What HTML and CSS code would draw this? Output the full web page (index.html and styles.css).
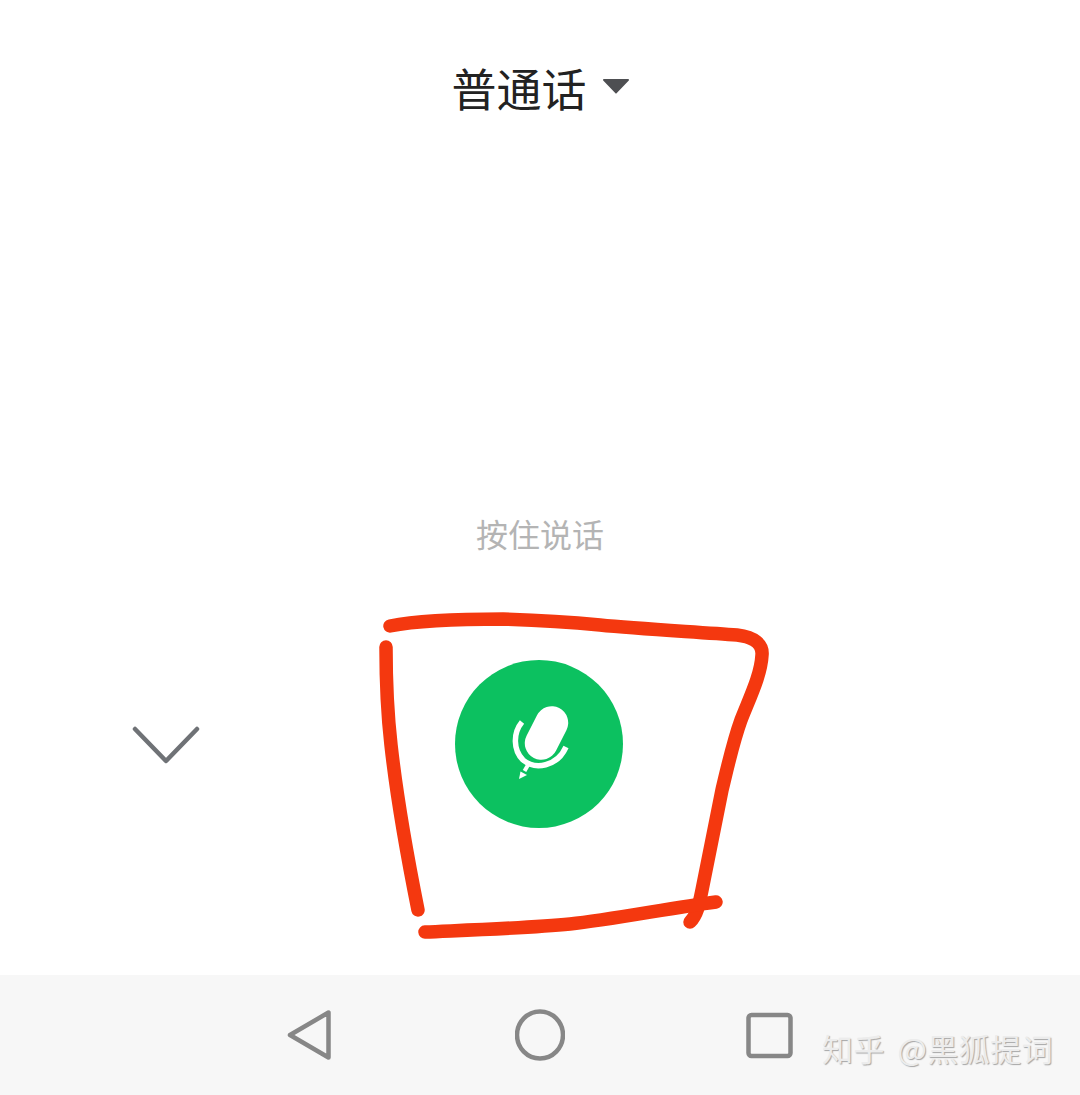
FILE: index.html
```html
<!DOCTYPE html>
<html lang="zh-CN">
<head>
<meta charset="utf-8">
<title>普通话</title>
<link rel="stylesheet" href="styles.css">
</head>
<body>
<div class="page">
  <main class="main">
    <div class="title">
      <span class="title-text">普通话</span>
      <svg class="caret" width="26" height="16" viewBox="0 0 26 16"><path d="M1 1h24a1 1 0 0 1 .8 1.500L13.800 15a1 1 0 0 1-1.600 0L.2 2.500A1 1 0 0 1 1 1z" fill="#4e4f52"/></svg>
    </div>
    <p class="hint">按住说话</p>
    <div class="controls">
      <svg class="chevron" width="70" height="40" viewBox="0 0 70 40"><path d="M4 3l31 32L66 3" fill="none" stroke="#6f7276" stroke-width="4.500" stroke-linecap="round" stroke-linejoin="round"/></svg>
      <button class="mic" type="button" aria-label="按住说话">
        <svg width="168" height="168" viewBox="455 660 168 168">
          <rect x="530" y="705" width="33" height="56" rx="16.500" transform="rotate(27 546.500 733)" fill="#fff"/>
          <path d="M522 722C513 733 513 750 523 760C535 770 557 767 566 747" fill="none" stroke="#fff" stroke-width="5.500" stroke-linecap="butt"/>
          <path d="M528 765l-3.500 6" fill="none" stroke="#fff" stroke-width="4"/>
          <path d="M520.500 771.500l6.500 3.500l-8 4z" fill="#fff"/>
        </svg>
      </button>
    </div>
    <svg class="scribble" width="1080" height="975" viewBox="0 0 1080 975">
      <g fill="none" stroke="#f4380f" stroke-width="13.500" stroke-linecap="round" stroke-linejoin="round">
        <path d="M390 626C420 620 470 619 503 619C540 620 570 622 600 625C640 629 700 632 737 635C755 637 763 645 762 655C761 675 750 697 741 720C733 742 728 765 722 790C715 825 708 860 702 890C699 905 697 915 690 922"/>
        <path d="M386 647C386 680 387 710 391 745C396 790 405 845 418 910"/>
        <path d="M425 932C470 930 530 928 570 924C610 920 670 908 716 902"/>
      </g>
    </svg>
  </main>
  <nav class="nav">
    <svg width="50" height="54" viewBox="0 0 50 54"><path d="M5 27L43.500 4.500V49.500z" fill="none" stroke="#878787" stroke-width="4.500" stroke-linejoin="round"/></svg>
    <svg width="50" height="54" viewBox="0 0 50 54"><ellipse cx="25" cy="27" rx="23" ry="23.500" fill="none" stroke="#878787" stroke-width="4.500"/></svg>
    <svg width="50" height="54" viewBox="0 0 50 54"><rect x="3.500" y="7" width="42" height="41" rx="3" fill="none" stroke="#878787" stroke-width="4.500"/></svg>
    <span class="watermark">知乎 @黑狐提词</span>
  </nav>
</div>
</body>
</html>
```

FILE: styles.css
```css
* {
  box-sizing: border-box;
}

html,
body {
  margin: 0;
  padding: 0;
  background: #ffffff;
}

body {
  font-family: "Noto Sans CJK SC", "Noto Sans", sans-serif;
}

.page {
  width: 1080px;
  height: 1095px;
  display: flex;
  flex-direction: column;
  overflow: hidden;
}

.main {
  position: relative;
  height: 975px;
  display: flex;
  flex-direction: column;
  align-items: center;
  background: #ffffff;
}

.title {
  margin-top: 60px;
  height: 60px;
  display: flex;
  align-items: center;
  gap: 16px;
}

.title-text {
  font-size: 45px;
  line-height: 54px;
  margin-top: -4px;
  color: #222222;
}

.caret {
  display: block;
  margin-top: -8px;
}

.hint {
  margin: 393px 0 0;
  font-size: 32px;
  line-height: 40px;
  color: #b4b4b4;
}

.controls {
  width: 100%;
  margin-top: 107px;
  display: grid;
  grid-template-columns: 455px 168px 1fr;
  align-items: center;
}

.chevron {
  display: block;
  justify-self: start;
  margin-left: 131px;
  margin-top: 4px;
}

.mic {
  width: 168px;
  height: 168px;
  padding: 0;
  border: 0;
  border-radius: 50%;
  background: #0cc160;
}

.mic svg {
  display: block;
}

.scribble {
  position: absolute;
  left: 0;
  top: 0;
}

.nav {
  position: relative;
  height: 120px;
  display: flex;
  align-items: center;
  justify-content: center;
  gap: 180px;
  background: #f7f7f7;
}

.watermark {
  position: absolute;
  left: 822px;
  top: 51px;
  font-size: 31px;
  line-height: 44px;
  letter-spacing: 0.5px;
  word-spacing: 5px;
  white-space: nowrap;
  color: #ececec;
  text-shadow: 1px 1px 1px #a6a6a6;
}
```
